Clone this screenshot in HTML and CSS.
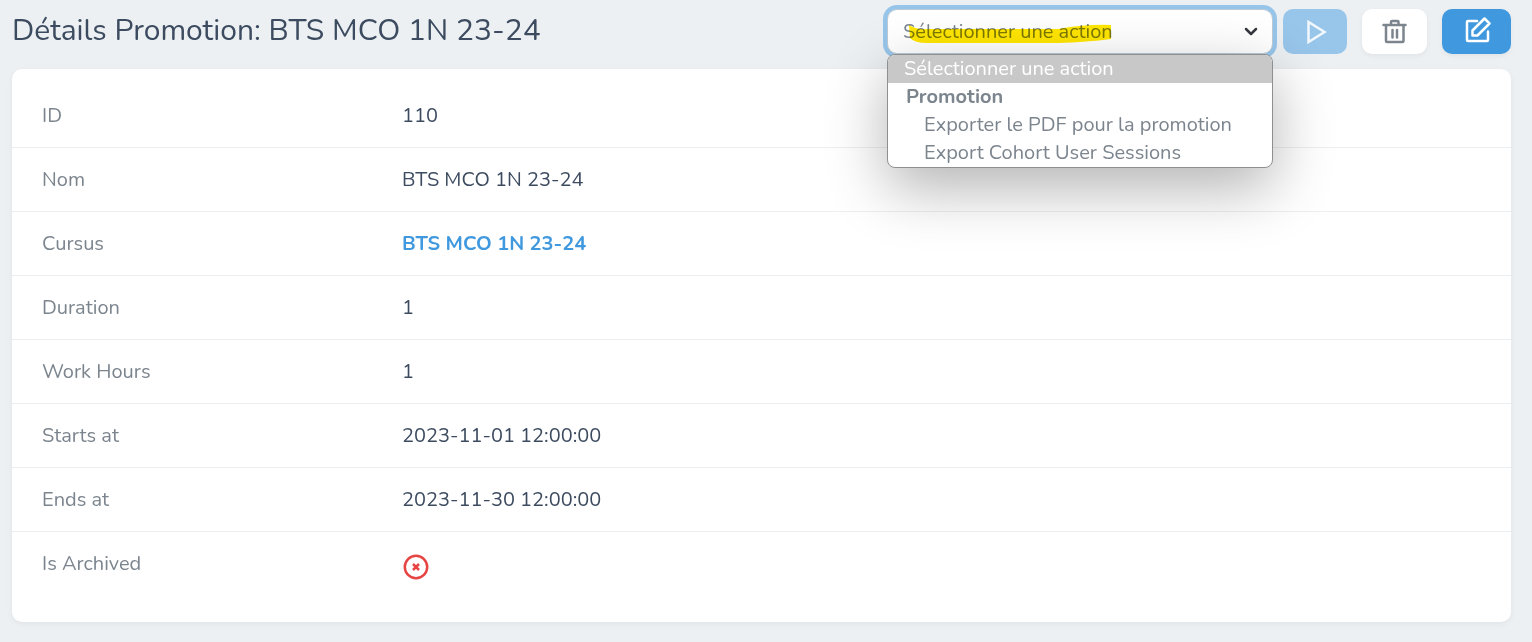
FILE: index.html
```html
<!DOCTYPE html>
<html lang="fr">
<head>
  <meta charset="UTF-8">
  <meta name="viewport" content="width=device-width, initial-scale=1.0">
  <title>Détails Promotion</title>
  <link rel="stylesheet" href="styles.css">
</head>
<body>
  <header class="page-header">
    <h1>Détails Promotion: BTS MCO 1N 23-24</h1>
    <div class="toolbar">
      <div class="action-picker">
        <select class="action-select" aria-label="Sélectionner une action">
          <option>Sélectionner une action</option>
          <optgroup label="Promotion">
            <option>Exporter le PDF pour la promotion</option>
            <option>Export Cohort User Sessions</option>
          </optgroup>
        </select>
        <svg class="chevron" width="14" height="9" viewBox="0 0 14 9" aria-hidden="true"><path d="M2 2l5 5 5-5"/></svg>
        <svg class="marker" width="204" height="22" viewBox="0 0 204 22" aria-hidden="true"><path d="M1 2Q8 7 20 6L150 6Q180 1 203 2L203 16Q180 19 150 20L20 20Q6 20 2 15Z"/></svg>
        <ul class="action-menu" role="listbox" aria-label="Actions">
          <li class="option selected" role="option" aria-selected="true">Sélectionner une action</li>
          <li class="group" role="presentation">Promotion</li>
          <li class="option nested" role="option">Exporter le PDF pour la promotion</li>
          <li class="option nested" role="option">Export Cohort User Sessions</li>
        </ul>
      </div>
      <button class="btn btn-run" type="button" aria-label="Lancer" disabled>
        <svg width="24" height="28" viewBox="0 0 24 28"><path d="M5.5 4v20l16-10z"/></svg>
      </button>
      <button class="btn btn-delete" type="button" aria-label="Supprimer">
        <svg width="26" height="28" viewBox="0 0 26 28"><path d="M1.5 7h22M4 7v16q0 1 1 1h15.500q1 0 1-1V7M9 7V4q0-1 1-1h5.500q1 0 1 1v3M10.500 12v7.500M15 12v7.500"/></svg>
      </button>
      <a class="btn btn-edit" href="#" aria-label="Modifier">
        <svg width="26" height="28" viewBox="0 0 26 28"><path d="M13 3H4q-1 0-1 1v18q0 1 1 1h19q1 0 1-1V13.500M8.500 17.500v-5L20.500.5l5 5-12 12z"/></svg>
      </a>
    </div>
  </header>

  <dl class="card">
    <div class="row"><dt>ID</dt><dd>110</dd></div>
    <div class="row"><dt>Nom</dt><dd>BTS MCO 1N 23-24</dd></div>
    <div class="row"><dt>Cursus</dt><dd><a href="#">BTS MCO 1N 23-24</a></dd></div>
    <div class="row"><dt>Duration</dt><dd>1</dd></div>
    <div class="row"><dt>Work Hours</dt><dd>1</dd></div>
    <div class="row"><dt>Starts at</dt><dd>2023-11-01 12:00:00</dd></div>
    <div class="row"><dt>Ends at</dt><dd>2023-11-30 12:00:00</dd></div>
    <div class="row">
      <dt>Is Archived</dt>
      <dd>
        <svg class="status-no" width="28" height="28" viewBox="0 0 28 28" role="img" aria-label="Non"><circle cx="14" cy="14" r="11.200"/><path d="M11 11l6 6M17 11l-6 6"/></svg>
      </dd>
    </div>
  </dl>
</body>
</html>
```
FILE: styles.css
```css
* {
  box-sizing: border-box;
}
body {
  margin: 0;
  padding: 9px 21px 19px 12px;
  background: #ecf0f3;
  color: #3c4b5f;
  font-family: Nunito, "Open Sans", sans-serif;
  font-size: 20px;
  font-weight: 400;
  line-height: 28px;
}
.page-header {
  display: flex;
  justify-content: space-between;
  align-items: flex-start;
  margin-bottom: 15px;
}
h1 {
  margin: 0;
  font-size: 30px;
  font-weight: 400;
  line-height: 44px;
}
.toolbar {
  display: flex;
  gap: 15px;
}
.action-picker {
  position: relative;
  width: 386px;
  margin-right: -5px;
}
.action-select {
  display: block;
  width: 100%;
  height: 45px;
  padding: 0 40px 0 15px;
  appearance: none;
  background: #fff;
  border: 1px solid #bacad6;
  border-radius: 10px;
  box-shadow: 0 0 0 4px #97c5ea;
  color: #7c858e;
  font: inherit;
}
.chevron {
  position: absolute;
  top: 18px;
  right: 15px;
  fill: none;
  stroke: #35393f;
  stroke-width: 2.5;
  stroke-linecap: round;
  stroke-linejoin: round;
}
/* trait de surligneur sur le libellé */
.marker {
  position: absolute;
  top: 14px;
  left: 21px;
  fill: #ffe600;
  mix-blend-mode: multiply;
  pointer-events: none;
}
.action-menu {
  position: absolute;
  top: 45px;
  left: 0;
  z-index: 10;
  width: 100%;
  margin: 0;
  padding: 0;
  overflow: hidden;
  list-style: none;
  background: #fff;
  border: 1px solid #8f8f8f;
  border-radius: 8px;
  box-shadow: 0 20px 60px rgba(0, 0, 0, 0.3);
  color: #7c858e;
}
.action-menu li {
  padding-left: 16px;
}
.action-menu .selected {
  background: #c8c8c8;
  color: #fff;
}
.action-menu .group {
  padding-left: 18px;
  font-weight: 700;
}
.action-menu .nested {
  padding-left: 36px;
}
.btn {
  display: flex;
  justify-content: center;
  align-items: center;
  width: 65px;
  height: 45px;
  padding: 0;
  border: 0;
  border-radius: 10px;
  box-shadow: 0 2px 5px rgba(0, 0, 0, 0.05);
}
.btn svg {
  overflow: visible;
  fill: none;
  stroke: #fff;
  stroke-width: 2.5;
  stroke-linejoin: round;
  stroke-linecap: round;
}
.btn-run {
  width: 64px;
  background: #98c5ea;
  box-shadow: none;
}
.btn-run svg {
  stroke: #f3f8fd;
  stroke-linejoin: miter;
}
.btn-delete {
  background: #fff;
}
.btn-delete svg {
  stroke: #7c858e;
}
.btn-edit {
  width: 69px;
  background: #4099de;
}
.card {
  margin: 0;
  padding: 15px 0 26px;
  background: #fff;
  border-radius: 10px;
  box-shadow: 0 2px 6px rgba(0, 0, 0, 0.05);
}
.row {
  display: flex;
  height: 64px;
  padding: 18px 30px 17px;
  border-bottom: 1px solid #eceff1;
}
.row:last-child {
  border-bottom: 0;
}
dt {
  width: 360px;
  color: #7c858e;
}
dd {
  margin: 0;
}
dd a {
  color: #4099de;
  font-weight: 700;
  text-decoration: none;
}
.status-no {
  display: block;
  margin-top: 3px;
  fill: none;
  stroke: #e74444;
  stroke-width: 2.5;
}
```
